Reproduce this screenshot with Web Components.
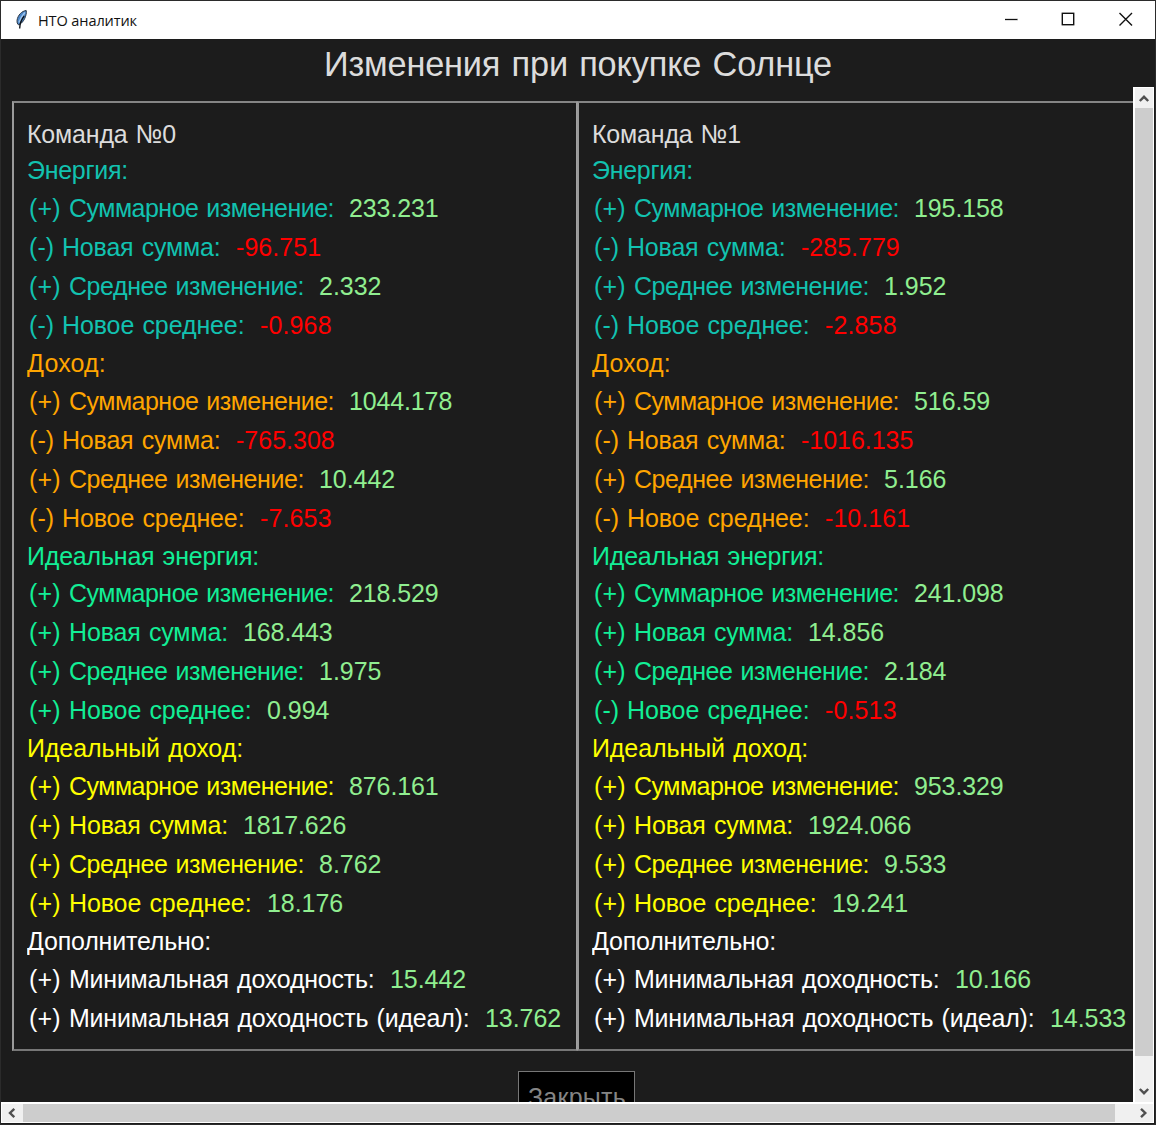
<!DOCTYPE html>
<html lang="ru"><head><meta charset="utf-8"><title>НТО аналитик</title>
<style>html,body{margin:0;height:100%;background:#232323;overflow:hidden}body{font-family:"Liberation Sans",Arial,sans-serif}</style></head>
<body><analyst-window></analyst-window>
<script>
// Text run set slightly condensed, with letter spacing adjusted to an exact advance width.
class FitText extends HTMLElement{
  constructor(){super();this.attachShadow({mode:'open'}).innerHTML='<style>:host{display:inline-block;white-space:pre;flex:none}span{display:inline-block;transform-origin:0 50%}</style><span></span>'}
  connectedCallback(){
    const t=this.getAttribute('text'),w=+this.getAttribute('w'),k=+(this.getAttribute('k')||.96),s=this.shadowRoot.querySelector('span');
    s.textContent=t;
    s.style.letterSpacing=((w/k-s.getBoundingClientRect().width)/t.length)+'px';
    s.style.width=w+'px';
    s.style.transform=`scaleX(${k})`;
  }
}
customElements.define('fit-text',FitText);

class TitleBar extends HTMLElement{
  constructor(){super();this.attachShadow({mode:'open'})}
  connectedCallback(){this.shadowRoot.innerHTML=`<style>
  :host{display:flex;height:38px;background:#fff;align-items:center;flex:none;color:#111}
  .feather{margin:0 0 0 13px;flex:none}
  fit-text{margin-left:9.5px;font:15px/20px "Open Sans",sans-serif}
  .name{flex:1;display:flex;padding-bottom:1px}
  .btns{display:flex;flex:none;margin-right:1px}.btns svg{display:block}
  </style>
  <svg class="feather" width="14" height="22" viewBox="0 0 14 22"><path d="M12.2 1.5C8 2 3.7 6 3 11.5L3.2 14l1.2 1.8C8.4 14.5 11.7 9.5 12.4 3.5z" fill="#4b86c8" stroke="#2a3644" stroke-width="1"/><path d="M10.8 3.5C8 7 6.2 10 5 13.5" stroke="#9cc4ee" stroke-width="1.6" fill="none"/><path d="M10.2 7C7.4 10.500 5.700 14 5.700 19.500" stroke="#0b1016" stroke-width="1.3" fill="none"/></svg>
  <div class="name"><fit-text w="99" k="0.97" text="${this.getAttribute('name')}"></fit-text></div>
  <div class="btns">
  <svg width="57" height="38"><path d="M22 18.500h12.500" stroke="#111" stroke-width="1.3"/></svg>
  <svg width="57" height="38"><rect x="22.300" y="12.300" width="11.400" height="11.400" fill="none" stroke="#111" stroke-width="1.4"/></svg>
  <svg width="57" height="38"><path d="M22.500 12l12.500 12.500M35 12L22.500 24.500" stroke="#111" stroke-width="1.4"/></svg>
  </div>`}
}
customElements.define('title-bar',TitleBar);

class ScrollBar extends HTMLElement{
  constructor(){super();this.attachShadow({mode:'open'}).innerHTML=`<style>
  :host{display:flex;box-sizing:border-box;background:#f0f0f0;border:1px solid #fff;flex:none}
  :host([dir=v]){flex-direction:column;width:21px;margin-right:1px;border-width:1px 1px 0 2px}
  :host([dir=h]){height:21px;margin-right:1px;border-width:2px 1px 1px 1px}
  svg{flex:none;display:block}.thumb{flex:none;background:#cdcdcd}.rest{flex:1}
  :host([dir=v]) .thumb{height:948px}:host([dir=h]) .thumb{width:1092px}
  path{fill:none;stroke:#505050;stroke-width:2.4}
  </style><svg width="20" height="20"><path/></svg><div class="thumb"></div><div class="rest"></div><svg width="20" height="20"><path/></svg>`;}
  connectedCallback(){
    const v=this.getAttribute('dir')==='v',[a,b]=this.shadowRoot.querySelectorAll('svg'),p=x=>x.firstElementChild;
    for(const s of [a,b])s.setAttribute(v?'width':'height',18);
    p(a).setAttribute('d',v?'M4.8 13L9 8.8L13.2 13':'M12.3 4.8L8 9L12.3 13.2');
    p(b).setAttribute('d',v?'M4.8 7L9 11.2L13.2 7':'M8 4.8L12.3 9L8 13.2');
    if(!v)a.setAttribute('width',20.5);
  }
}
customElements.define('scroll-bar',ScrollBar);

class StatRow extends HTMLElement{
  constructor(){super();this.attachShadow({mode:'open'})}
  connectedCallback(){
    const g=k=>this.getAttribute(k),val=g('value'),l=g('label'),pw=l[1]==='+'?40.2:33.7;
    let w=0;for(const c of val)w+=c==='.'?8.3:c==='-'?9.2:13.55;
    this.shadowRoot.innerHTML=`<style>:host{display:flex;height:39px;align-items:center;line-height:39px;padding-left:2px;word-spacing:1.5px}
    .v{margin-left:15.6px;color:${val[0]==='-'?'#ff0000':'#90ee90'}}</style><fit-text w="${pw}" text="${l.slice(0,4)}"></fit-text><fit-text w="${g('w')-1.8-pw}" text="${l.slice(4)}"></fit-text><fit-text class="v" w="${w}" text="${val}"></fit-text>`;
  }
}
customElements.define('stat-row',StatRow);

class StatHead extends HTMLElement{
  constructor(){super();this.attachShadow({mode:'open'})}
  connectedCallback(){this.shadowRoot.innerHTML=`<style>:host{display:flex;height:36.7px;line-height:36.7px;word-spacing:1.5px;padding-left:.8px}</style><fit-text w="${this.getAttribute('w')-2}" text="${this.getAttribute('text')}"></fit-text>`}
}
customElements.define('stat-head',StatHead);

class TeamPanel extends HTMLElement{
  constructor(){super();this.attachShadow({mode:'open'})}
  connectedCallback(){
    const W={'(+) Суммарное изменение:':307,'(-) Новая сумма:':194,'(+) Новая сумма:':201,'(+) Среднее изменение:':277,'(-) Новое среднее:':218,'(+) Новое среднее:':224.5,'(+) Минимальная доходность:':347.5,'(+) Минимальная доходность (идеал):':442.5};
    const heads=[['Энергия:','#12c2b0',103],['Доход:','#ffa500',81],['Идеальная энергия:','#12ee96',234],['Идеальный доход:','#ffff00',218],['Дополнительно:','#ffffff',186]];
    const names=['Суммарное изменение:','Новая сумма:','Среднее изменение:','Новое среднее:'];
    const vals=this.getAttribute('values').split(' ');let i=0,h='';
    heads.forEach(([t,c,w],k)=>{
      h+=`<section style="color:${c}"><stat-head text="${t}" w="${w}"></stat-head>`;
      for(const n of k<4?names:['Минимальная доходность:','Минимальная доходность (идеал):']){
        const v=vals[i++],l=(v[0]==='-'?'(-) ':'(+) ')+n;
        h+=`<stat-row label="${l}" w="${W[l]}" value="${v}"></stat-row>`;
      }
      h+='</section>';
    });
    this.shadowRoot.innerHTML=`<style>:host{display:block;box-sizing:border-box;flex:none;width:565px;height:950px;border:solid #858585;border-width:2px 1px 2px 2px;border-color:#858585 #a0a0a0 #777 #9a9a9a;padding:12.5px 0 0 12.5px;font-size:26px;color:#dcdcdc}</style>
    <stat-head text="${this.getAttribute('name')}" w="151"></stat-head>${h}`;
  }
}
customElements.define('team-panel',TeamPanel);

class AnalystWindow extends HTMLElement{
  constructor(){super();this.attachShadow({mode:'open'}).innerHTML=`<style>
  :host{display:flex;flex-direction:column;box-sizing:border-box;width:1156px;height:1125px;padding:1px;background:#2b2b2b}
  .body{display:flex;flex-direction:column;flex:1;background:#1c1c1c;min-height:0}
  h1{margin:0;height:48px;line-height:50px;font-size:35px;font-weight:400;color:#dcdcdc;display:flex;justify-content:center;word-spacing:2px;flex:none}
  .mid{display:flex;height:1015px;flex:none}
  .view{flex:1;min-width:0;overflow:hidden;padding:14px 0 0 11px}
  .teams{display:flex}
  .foot{display:flex;padding:20px 0 0 506px}
  button{all:unset;box-sizing:border-box;width:117px;height:50px;flex:none;background:#000;border:1px solid #777;color:#858585;font-size:26px;line-height:50px;display:flex;justify-content:center}
  </style>
  <title-bar name="НТО аналитик"></title-bar>
  <div class="body"><h1><fit-text w="508" k="0.98" text="Изменения при покупке Солнце"></fit-text></h1>
  <div class="mid"><div class="view"><div class="teams">
  <team-panel name="Команда №0" values="233.231 -96.751 2.332 -0.968 1044.178 -765.308 10.442 -7.653 218.529 168.443 1.975 0.994 876.161 1817.626 8.762 18.176 15.442 13.762"></team-panel>
  <team-panel name="Команда №1" values="195.158 -285.779 1.952 -2.858 516.59 -1016.135 5.166 -10.161 241.098 14.856 2.184 -0.513 953.329 1924.066 9.533 19.241 10.166 14.533"></team-panel>
  </div><div class="foot"><button><fit-text w="98" text="Закрыть"></fit-text></button></div></div>
  <scroll-bar dir="v"></scroll-bar></div>
  <scroll-bar dir="h"></scroll-bar></div>`}
}
customElements.define('analyst-window',AnalystWindow);
</script></body></html>
